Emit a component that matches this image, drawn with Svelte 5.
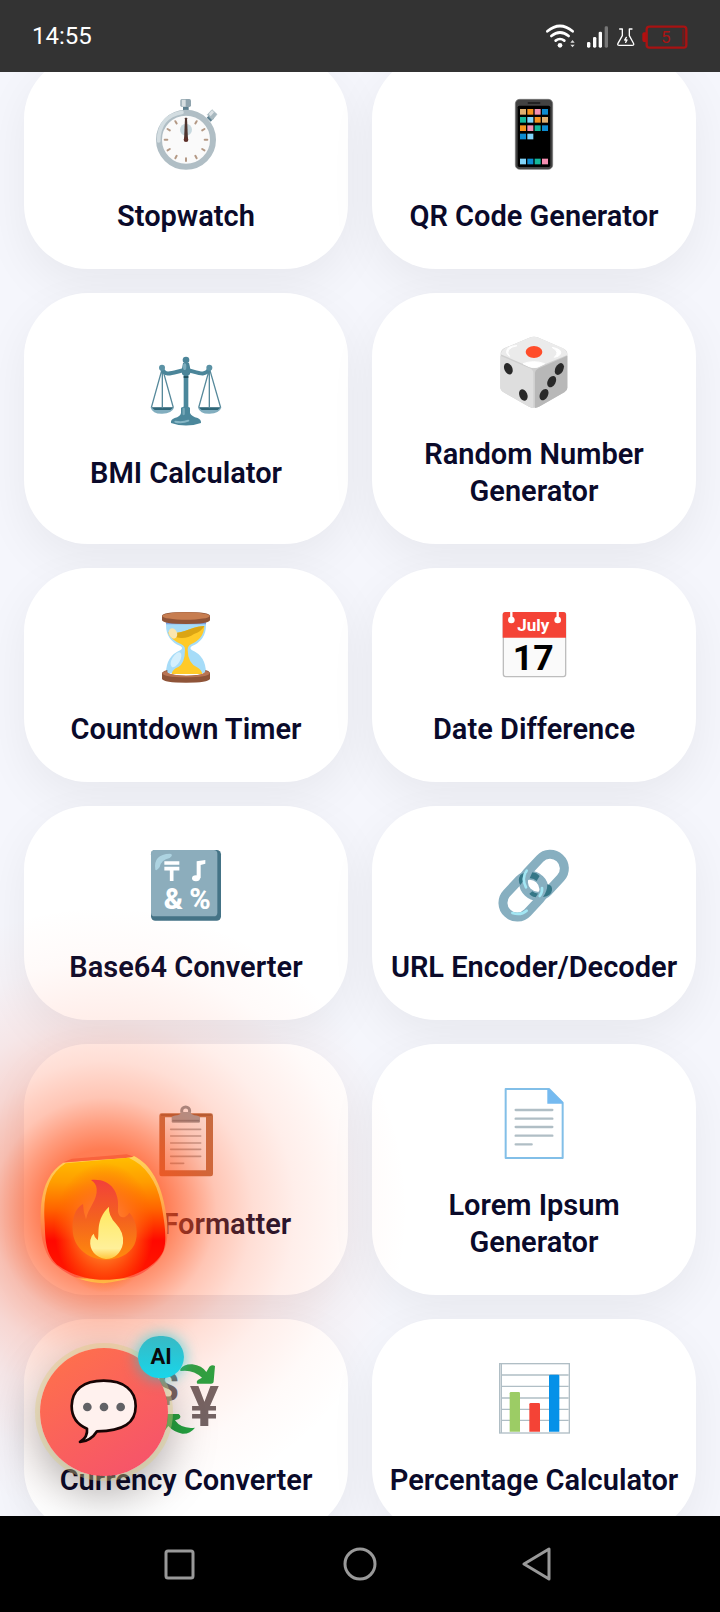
<script lang="ts">
  type Tool = { name: string; icon: string; box: string };

  // box is the viewBox of the tool's icon
  const tools: Tool[] = [
    { name: "Stopwatch", icon: "stopwatch", box: "450 120 216 216" },
    { name: "QR Code Generator", icon: "phone", box: "414 120 216 216" },
    { name: "BMI Calculator", icon: "scales", box: "90 78 216 216" },
    { name: "Random Number Generator", icon: "dice", box: "84 51 216 216" },
    { name: "Countdown Timer", icon: "hourglass", box: "90 66 216 216" },
    { name: "Date Difference", icon: "calendar", box: "84 66 216 216" },
    { name: "Base64 Converter", icon: "symbols", box: "90 57 216 216" },
    { name: "URL Encoder/Decoder", icon: "chain", box: "84 57 216 216" },
    { name: "JSON Formatter", icon: "clipboard", box: "450 197 216 216" },
    { name: "Lorem Ipsum Generator", icon: "page", box: "84 51 216 216" },
    { name: "Currency Converter", icon: "currency", box: "450 156 216 216" },
    { name: "Percentage Calculator", icon: "chart", box: "84 876 216 216" },
  ];

  const ticks = Array.from({ length: 11 }, (_, i) => (i + 1) * 30);

  // [x, y, color] of every app tile on the phone screen
  const apps: [number, number, string][] = [
    [480, 150, "#e0b070"], [502, 150, "#f7931e"], [524, 150, "#f48fb1"], [546, 150, "#0d8bd0"],
    [480, 174, "#14b89a"], [502, 174, "#81d4fa"], [524, 174, "#f7931e"], [546, 174, "#e0b070"],
    [480, 199, "#f7931e"], [502, 199, "#f48fb1"], [524, 199, "#14b89a"], [546, 199, "#0d8bd0"],
    [480, 224, "#0d8bd0"], [502, 224, "#81d4fa"],
    [480, 299, "#81d4fa"], [502, 299, "#0d8bd0"], [524, 299, "#14b89a"], [546, 299, "#f48fb1"],
  ];
</script>

<div class="screen">
  <header class="status-bar">
    <time>14:55</time>
    <div class="status-icons">
      <svg width="32" height="30" viewBox="138 60 96 90" fill="none" stroke="#fff" stroke-width="8" stroke-linecap="round">
        <path d="M142 91Q180 59 218 91M154 105Q180 84 206 105M167 119Q180 109 193 119" />
        <circle cx="180" cy="133" r="7" fill="#fff" stroke="none" />
        <path d="M211 125l6.500-8 6.500 8zM211 131l6.500 8 6.500-8z" fill="#ddd" stroke="none" />
      </svg>
      <svg width="23" height="30" viewBox="258 60 69 90">
        <rect x="261" y="123" width="10" height="17" rx="4" fill="#fff" />
        <rect x="279" y="108" width="10" height="32" rx="4" fill="#fff" />
        <rect x="296" y="92" width="10" height="48" rx="4" fill="#fff" />
        <rect x="314" y="76" width="10" height="64" rx="4" fill="#777" />
      </svg>
      <svg width="18" height="30" viewBox="351 60 54 90" fill="none" stroke="#fff" stroke-width="4" stroke-linecap="round" stroke-linejoin="round">
        <path d="M359 84H367V104L354 127Q351 133 358 133H396Q404 133 400 126L388 104V84H396" />
        <path d="M379 109l-5 8h7l-4 7" />
      </svg>
      <svg class="battery" width="45" height="30" viewBox="429 60 135 90">
        <path d="M438 94H432Q427 94 427 100V117Q427 123 432 123H438Z" fill="#b30f0f" />
        <rect x="440" y="77" width="119" height="63" rx="8" fill="none" stroke="#a81212" stroke-width="7" />
        <path d="M550 84V133" stroke="#6d1c1c" stroke-width="7" />
        <text x="497" y="126" text-anchor="middle" font-size="51" fill="#a81414">5</text>
      </svg>
    </div>
  </header>

  <main>
    <nav class="tools" aria-label="Tools">
      {#each tools as tool}
        <a class="card" href="#tool">
          <svg class="icon" viewBox={tool.box} aria-hidden="true">
            {#if tool.icon === "stopwatch"}
              <path d="M549 138h17v18h-17z" fill="#5c7f8f" />
              <rect x="541" y="120" width="32" height="24" rx="5" fill="#90a4ae" />
              <path d="M545 122h12v21h-12z" fill="#d7dee1" />
              <path d="M620 176l10-10 12 12-10 10z" fill="#5c7f8f" />
              <path d="M622 167l14-15 15 14-14 17z" fill="#a8b8bf" stroke="#a8b8bf" stroke-width="2" stroke-linejoin="round" />
              <path d="M626 165l10-11 6 6-10 12z" fill="#dbe1e4" />
              <circle cx="558" cy="242" r="81" fill="#fafafa" stroke="#b0bec5" stroke-width="18" />
              <path d="M476 246Q476 172 546 160" fill="none" stroke="#d3dde1" stroke-width="11" stroke-linecap="round" />
              {#each ticks as angle}
                <path d="M558 186v-8" transform="rotate({angle} 558 242)" stroke="#b39884" stroke-width="6" stroke-linecap="round" />
              {/each}
              <circle cx="558" cy="212" r="18" fill="#c7d8de" />
              <path d="M555 178q3-5 6 0l3 64h-12z" fill="#4e342e" />
              <circle cx="558" cy="242" r="7" fill="#5d2f28" />
            {:else if tool.icon === "phone"}
              <rect x="466" y="121" width="112" height="210" rx="13" fill="#424242" stroke="#757575" stroke-width="2" />
              <rect x="503" y="129" width="38" height="6" rx="2" fill="#222" />
              <rect x="473" y="140" width="98" height="184" rx="5" fill="#000" />
              {#each apps as [x, y, color]}
                <rect {x} {y} width="18" height="17" fill={color} />
              {/each}
            {:else if tool.icon === "scales"}
              <path d="M92 233H162Q156 250 127 251T92 233zM234 233H304Q298 250 269 251T234 233z" fill="#82aebf" />
              <path d="M94 232H161L151 240H104zM235 232H303L293 240H245z" fill="#2f6678" />
              <path d="M126 118L94 233M127 118V235M128 118L160 233M268 118L236 233M268 118V235M269 118L302 233" fill="none" stroke="#56899b" stroke-width="4" />
              <path d="M126 116C136 142 160 126 198 119C232 126 255 142 268 116" fill="none" stroke="#4b8599" stroke-width="12" stroke-linecap="round" />
              <circle cx="126" cy="113" r="9" fill="#5b92a5" /><circle cx="268" cy="113" r="9" fill="#5b92a5" />
              <rect x="191" y="134" width="14" height="105" fill="#4b879b" />
              <path d="M191 138h14v6h-14z" fill="#20505f" />
              <circle cx="198" cy="90" r="10" fill="#4b8599" />
              <path d="M189 99H207Q213 119 210 133Q198 144 186 133Q184 117 189 99z" fill="#4b8599" />
              <ellipse cx="194" cy="110" rx="5" ry="10" fill="#7dadbd" />
              <path d="M183 233Q198 224 210 233V249Q215 260 233 264Q244 269 243 279Q198 294 153 279Q151 269 164 264Q181 260 183 249z" fill="#4b879b" />
              <path d="M166 275Q188 279 205 272" fill="none" stroke="#87b7c6" stroke-width="6" stroke-linecap="round" />
              <path d="M191 237v15" stroke="#77a8b8" stroke-width="7" stroke-linecap="round" />
            {:else if tool.icon === "dice"}
              <path d="M92 98Q92 91 102 85L178 53Q192 48 206 53L281 86Q292 92 292 101V204Q292 211 283 217L207 260Q192 267 177 260L101 217Q91 211 91 202z" fill="#cfcfcf" />
              <path d="M92 103Q95 88 110 82L178 53Q192 48 206 53L278 84Q291 91 292 105L203 142Q191 147 180 141z" fill="#ebebeb" />
              <path d="M91 107L179 145Q189 149 190 158V264L177 260L101 217Q91 211 91 202z" fill="#dedede" />
              <path d="M292 107L207 145Q195 150 195 160V264L207 260L283 217Q292 211 292 204z" fill="#b8b8b8" />
              <path d="M141 77Q124 80 116 89Q109 99 119 109Q105 100 112 88Q118 77 141 77zM246 82Q279 88 271 103Q266 110 253 112Q272 96 246 82zM159 131Q191 119 224 131L204 141Q191 145 178 140z" fill="#fff" stroke="#fff" stroke-width="3" />
              <ellipse cx="192" cy="96" rx="25" ry="18" fill="#ff4d2a" />
              <g fill="#292929">
                <ellipse cx="115" cy="146" rx="12" ry="18" transform="rotate(-24 115 146)" />
                <ellipse cx="160" cy="225" rx="12" ry="18" transform="rotate(-22 160 225)" />
                <ellipse cx="268" cy="147" rx="12" ry="19" transform="rotate(28 268 147)" />
                <ellipse cx="245" cy="185" rx="12" ry="18" transform="rotate(28 245 185)" />
                <ellipse cx="222" cy="224" rx="12" ry="18" transform="rotate(28 222 224)" />
              </g>
            {:else if tool.icon === "hourglass"}
              <path d="M138 96H258V105Q258 151 216 168Q207 174 215 180Q258 198 258 250H138Q138 198 182 180Q191 174 181 168Q138 151 138 105z" fill="#a6dcf8" />
              <path d="M138 97H258V103H138z" fill="#7d9edb" />
              <path d="M144 127Q167 135 209 118Q237 108 253 108Q252 146 213 163Q203 168 203 179Q203 218 231 232Q244 238 247 252H155Q157 238 175 231Q195 219 195 179Q195 168 184 163Q151 149 144 127z" fill="#ffca28" />
              <path d="M146 129Q167 134 209 118Q237 108 253 108Q246 123 222 132Q204 145 183 144Q161 143 146 129z" fill="#dba514" />
              <ellipse cx="159" cy="130" rx="12" ry="16" fill="#fbe6ae" transform="rotate(-24 159 130)" />
              <ellipse cx="168" cy="209" rx="12" ry="25" fill="#d4effc" transform="rotate(30 168 209)" />
              <path d="M126 78Q126 66 198 66T270 78V91Q267 102 198 102T126 91z" fill="#8f5438" />
              <ellipse cx="198" cy="78" rx="71" ry="11" fill="#c77d50" />
              <path d="M126 248Q132 242 142 240V249Q160 257 198 257T256 249V240Q267 242 270 248V267Q265 278 198 278T126 267z" fill="#8f5438" />
              <path d="M127 250Q132 243 139 243Q144 256 198 257T257 243Q267 244 269 250Q265 262 198 262T127 250z" fill="#b97453" />
            {:else if tool.icon === "calendar"}
              <rect x="100" y="68" width="187" height="192" rx="7" fill="#fafafa" stroke="#bdbdbd" stroke-width="4" />
              <path d="M98 143V74Q98 66 106 66H280Q288 66 288 74V143z" fill="#f44336" />
              <path d="M124 64V84M263 64V84" stroke="#fff" stroke-width="7" />
              <circle cx="124" cy="90" r="10" fill="#fff" /><circle cx="263" cy="90" r="10" fill="#fff" />
              <text x="190" y="123" text-anchor="middle" font-size="51" font-weight="700" fill="#fff">July</text>
              <text x="190" y="240" text-anchor="middle" font-size="107" font-weight="700" fill="#000">17</text>
            {:else if tool.icon === "symbols"}
              <rect x="93" y="57" width="210" height="212" rx="13" fill="#447386" />
              <rect x="93" y="57" width="199" height="199" rx="11" fill="#8cadbc" />
              <path d="M106 116Q99 69 150 68Q162 70 149 81Q124 86 119 108Q110 121 106 116z" fill="#add3e1" />
              <path d="M133 96H178M133 113H178M155 113V150" stroke="#fff" stroke-width="11" />
              <ellipse cx="228" cy="142" rx="12" ry="9" fill="#fff" />
              <path d="M230 142V91L256 87V98L242 102V142z" fill="#fff" />
              <text x="160" y="235" text-anchor="middle" font-size="87" font-weight="800" fill="#fff">&amp;</text>
              <text x="240" y="235" text-anchor="middle" font-size="87" font-weight="800" fill="#fff">%</text>
            {:else if tool.icon === "chain"}
              <g fill="none" stroke="#87afc0" stroke-width="27">
                <rect x="152" y="90" width="140" height="85" rx="42" transform="rotate(-47 222 133)" />
                <rect x="90" y="153" width="140" height="85" rx="42" transform="rotate(-47 160 195)" />
              </g>
              <path d="M151 132Q142 148 151 162L164 145Q163 130 172 127Q160 124 151 132zM187 124Q200 125 209 135L200 150Q190 141 179 142zM187 181Q194 188 205 187L197 199Q181 195 178 188zM232 160Q248 162 246 178Q244 195 219 198Q232 181 232 160z" fill="#357787" />
              <path d="M170 119Q154 141 168 169M216 171Q218 184 209 195M127 246Q153 254 170 239" fill="none" stroke="#a3e7f4" stroke-width="8" stroke-linecap="round" />
            {:else if tool.icon === "clipboard"}
              <rect x="478" y="216" width="161" height="189" rx="7" fill="#b87046" />
              <path d="M483 219H635V223H483z" fill="#9b5630" />
              <path d="M495 228H618V387H495z" fill="#fafafa" />
              <path d="M512 264H602M512 284H602M512 305H602M512 324H602M512 345H602M512 366H551" stroke="#aaa" stroke-width="5" stroke-linecap="round" />
              <circle cx="557" cy="209" r="12" fill="none" stroke="#8c9499" stroke-width="9" />
              <path d="M515 241V228Q517 223 532 222Q542 220 543 212H571Q573 220 583 222Q598 223 600 228V241Q600 244 596 244H519Q515 244 515 241z" fill="#9aa0a3" />
              <path d="M517 238H598" stroke="#747b80" stroke-width="5" />
            {:else if tool.icon === "page"}
              <path d="M107 54H237L278 95V261H107z" fill="#fff" stroke="#82bfe8" stroke-width="6" stroke-linejoin="round" />
              <path d="M232 55H239L279 94V98H232z" fill="#75baf0" />
              <path d="M137 117H247M137 143H247M137 168H247M137 194H247M137 220H185" stroke="#b0bec5" stroke-width="7" stroke-linecap="round" />
            {:else if tool.icon === "currency"}
              <path d="M541 174Q551 159 577 160Q606 164 619 183L628 167Q637 160 645 165L641 211Q641 218 633 218H592Q586 210 599 204L606 200Q579 174 541 180z" fill="#1aa742" />
              <path d="M585 350Q571 369 547 368Q521 363 505 345L494 359Q486 367 481 358L485 318Q486 309 494 309H536Q546 316 537 324L525 328Q544 355 585 350z" fill="#1aa742" />
              <g text-anchor="middle" font-weight="700" fill="#6d6466">
                <text x="503" y="270" font-size="120">$</text>
                <text x="613" y="345" font-size="164">¥</text>
              </g>
            {:else}
              <rect x="89" y="878" width="209" height="208" fill="#fff" stroke="#b0bec5" stroke-width="4" />
              <path d="M93 912H296M93 946H296M93 981H296M93 1015H296M93 1048H296" stroke="#b0bec5" stroke-width="4" />
              <path d="M94 878V1086" stroke="#b0bec5" stroke-width="4" />
              <path d="M119 1082V967q0-4 4-4h23q4 0 4 4V1082z" fill="#9ccc65" />
              <path d="M178 1082V1000q0-4 4-4h24q4 0 4 4V1082z" fill="#f44336" />
              <path d="M237 1082V915q0-4 4-4h23q4 0 4 4V1082z" fill="#0591e8" />
            {/if}
          </svg>
          <span>{tool.name}</span>
        </a>
      {/each}
    </nav>

    <div class="floating">
      <button class="fire" type="button" aria-label="Trending">
        <svg viewBox="120 339 384 384" aria-hidden="true">
          <defs>
            <linearGradient id="ember" x1="0" y1="0" x2="0" y2="1">
              <stop offset="0" stop-color="#ffbd00" />
              <stop offset="0.2" stop-color="#ff9d00" />
              <stop offset="0.42" stop-color="#ff6400" />
              <stop offset="0.68" stop-color="#ff0800" />
              <stop offset="1" stop-color="#ff1a00" />
            </linearGradient>
            <radialGradient id="core">
              <stop offset="0" stop-color="#ff8c52" />
              <stop offset="0.5" stop-color="#ff7420" stop-opacity="0.9" />
              <stop offset="1" stop-color="#ff6a00" stop-opacity="0" />
            </radialGradient>
            <linearGradient id="flame" x1="0" y1="0" x2="0" y2="1">
              <stop offset="0" stop-color="#f2403a" />
              <stop offset="0.5" stop-color="#f4631e" />
              <stop offset="1" stop-color="#ff8a0c" />
            </linearGradient>
            <linearGradient id="inner" x1="0" y1="0" x2="0" y2="1">
              <stop offset="0" stop-color="#ffe95e" />
              <stop offset="0.8" stop-color="#fff09a" />
              <stop offset="1" stop-color="#ffc63c" />
            </linearGradient>
            <linearGradient id="rim" x1="0" y1="0" x2="0" y2="1">
              <stop offset="0" stop-color="#ffd45c" />
              <stop offset="0.35" stop-color="#ffb04f" />
              <stop offset="0.65" stop-color="#ff7047" />
              <stop offset="0.95" stop-color="#ff5a48" />
              <stop offset="0.97" stop-color="#ffd35a" />
            </linearGradient>
          </defs>
          <path d="M190 365L402 345C453 370 484 430 497 510C512 600 497 648 448 682C414 709 377 717 311 727C244 724 196 700 157 663C121 620 119 553 123 495C129 430 153 388 190 365z" fill="url(#rim)" />
          <path d="M190 364L216 353L380 340L402 347L372 352z" fill="#f9633d" />
          <path d="M197 367L386 350C436 372 470 420 483 485C496 553 501 601 490 630C472 671 416 700 371 711C303 724 231 715 171 671C137 638 136 600 134 546C127 456 147 399 197 367z" fill="url(#ember)" />
          <ellipse cx="312" cy="560" rx="150" ry="195" fill="url(#core)" />
          <path d="M273 417C330 411 359 451 354 505C352 527 371 541 388 515C410 535 417 583 403 611C387 642 352 657 312 656C260 653 220 618 218 568C216 535 224 502 249 489Q250 515 258 535C264 500 293 478 290 443Q288 426 273 417z" fill="url(#flame)" />
          <path d="M327 497Q324 523 348 548Q373 575 369 607C363 639 341 655 317 654C287 649 267 628 271 597Q273 584 281 578Q283 590 293 598C300 575 285 538 327 497z" fill="url(#inner)" />
        </svg>
      </button>

      <button class="chat" type="button" aria-label="Open AI chat">
        <svg viewBox="120 113 384 384" aria-hidden="true">
          <path d="M311 211C372 211 407 240 407 287C407 338 371 362 291 363Q272 393 240 395Q264 381 261 355C230 342 215 322 215 287C216 239 250 211 311 211z" fill="#fff1ee" stroke="#160404" stroke-width="8" stroke-linejoin="round" />
          <circle cx="262" cy="290" r="13" fill="#616165" /><circle cx="312" cy="290" r="13" fill="#616165" /><circle cx="362" cy="290" r="13" fill="#616165" />
        </svg>
        <span class="badge">AI</span>
      </button>
    </div>
  </main>

  <footer class="system-nav">
    <button type="button" aria-label="Recent apps">
      <svg viewBox="0 0 36 36"><rect x="4" y="5" width="27" height="27" rx="2" /></svg>
    </button>
    <button type="button" aria-label="Home">
      <svg viewBox="0 0 36 36"><circle cx="18" cy="18" r="15" /></svg>
    </button>
    <button type="button" aria-label="Back">
      <svg viewBox="0 0 36 36"><path d="M27 3V33L2 18z" /></svg>
    </button>
  </footer>
</div>

<style>
  :global(body) {
    background: #000;
  }

  .screen {
    display: flex;
    flex-direction: column;
    height: 100vh;
    font-family: Roboto, "Liberation Sans", sans-serif;
  }

  .status-bar {
    flex: none;
    display: flex;
    align-items: center;
    justify-content: space-between;
    height: 72px;
    padding: 0 32px;
    box-sizing: border-box;
    background: #333;
    color: #fff;
    font-size: 24px;
  }

  .status-icons {
    display: flex;
    gap: 8px;
  }

  .status-icons svg {
    overflow: visible;
  }

  main {
    position: relative;
    flex: 1;
    min-height: 0;
    overflow: hidden;
    background: #f5f6fc;
  }

  /* the list is scrolled part of the way under the status bar */
  .tools {
    display: grid;
    grid-template-columns: 1fr 1fr;
    gap: 24px;
    margin-top: -17px;
    padding: 0 24px 24px;
  }

  .card {
    display: flex;
    flex-direction: column;
    align-items: center;
    justify-content: center;
    gap: 27px;
    padding: 44px 16px 34px;
    border-radius: 64px;
    background: #fff;
    box-shadow: 0 16px 48px rgba(0, 0, 0, 0.06);
    color: #0a0a2a;
    font-size: 29px;
    font-weight: 600;
    line-height: 37px;
    text-align: center;
    text-decoration: none;
  }

  .icon {
    width: 72px;
    height: 72px;
    overflow: visible;
  }

  .floating {
    position: absolute;
    left: 40px;
    bottom: 40px;
    display: flex;
    flex-direction: column;
    gap: 66px;
  }

  .floating button {
    position: relative;
    z-index: 0;
    width: 128px;
    height: 128px;
    padding: 0;
    border: 0;
    border-radius: 50%;
    cursor: pointer;
  }

  .floating svg {
    display: block;
    width: 100%;
    height: 100%;
    overflow: visible;
  }

  .fire {
    background: none;
  }

  /* heat glow, spreads over the cards around the button */
  .fire::before {
    content: "";
    position: absolute;
    inset: -248px -240px -232px;
    z-index: -1;
    background: radial-gradient(
      closest-side,
      rgba(255, 80, 25, 0.75) 20%,
      rgba(255, 80, 25, 0.56) 28%,
      rgba(255, 85, 35, 0.34) 37%,
      rgba(255, 90, 45, 0.2) 49%,
      rgba(255, 90, 50, 0.1) 63%,
      rgba(255, 95, 60, 0.03) 82%,
      rgba(255, 95, 60, 0)
    );
    pointer-events: none;
  }

  .chat {
    background: linear-gradient(145deg, #ff7349, #f5506e);
    box-shadow:
      0 0 0 5px rgba(220, 205, 130, 0.4),
      0 16px 48px rgba(0, 0, 0, 0.35);
  }

  .badge {
    position: absolute;
    top: -12px;
    right: -16px;
    width: 46px;
    border-radius: 21px;
    background: linear-gradient(#38b9c4, #18d6ea);
    box-shadow: 0 0 16px rgba(0, 210, 225, 0.7);
    color: #0a0a0a;
    font-family: Roboto, "Liberation Sans", sans-serif;
    font-size: 22px;
    font-weight: 700;
    line-height: 42px;
    text-align: center;
  }

  .system-nav {
    flex: none;
    display: flex;
    align-items: center;
    justify-content: space-around;
    height: 96px;
    padding: 0 90px;
    background: #000;
  }

  .system-nav button {
    width: 36px;
    height: 36px;
    padding: 0;
    border: 0;
    background: none;
  }

  .system-nav svg {
    display: block;
    fill: none;
    stroke: #999;
    stroke-width: 3;
    stroke-linejoin: round;
  }
</style>
